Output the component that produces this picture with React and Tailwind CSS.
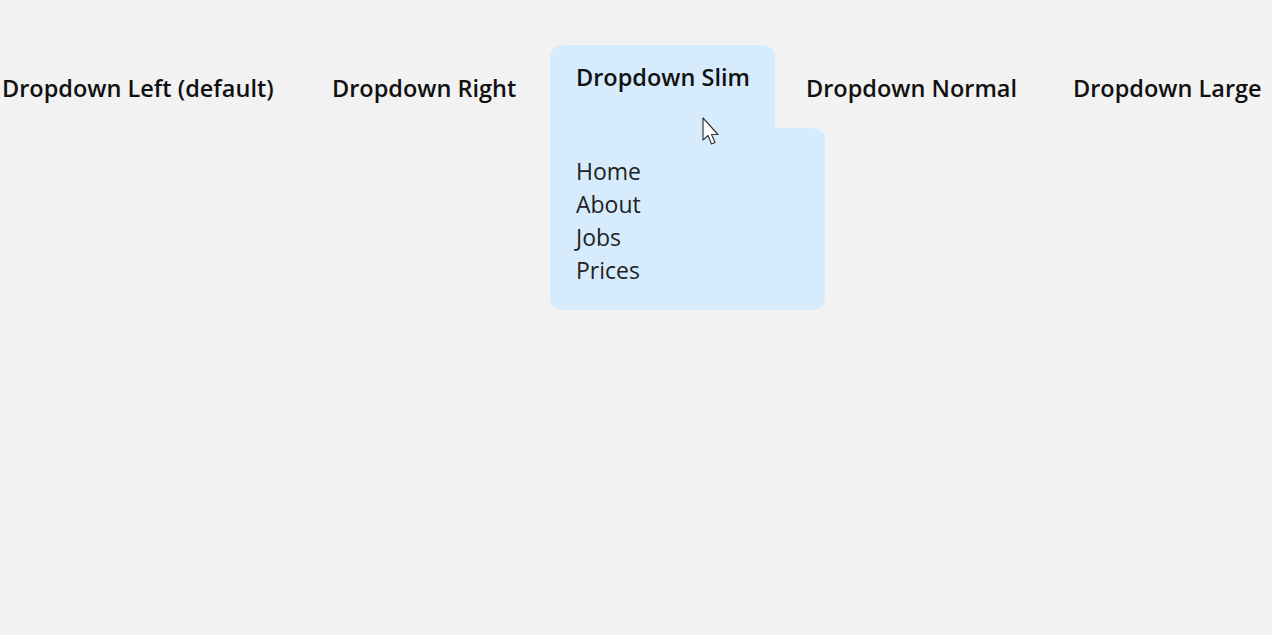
import React from "react";

const items = [
  { label: "Dropdown Left (default)", width: "w-[325px]" },
  { label: "Dropdown Right", width: "w-[239px]" },
  { label: "Dropdown Slim", width: "w-[225px]", open: true },
  { label: "Dropdown Normal", width: "w-[262px]" },
  { label: "Dropdown Large", width: "w-[240px]" },
];

const links = ["Home", "About", "Jobs", "Prices"];

const Cursor = () => (
  <svg width="20" height="30" viewBox="0 0 20 30" className="absolute left-[152px] top-[72px]">
    <path
      d="M1 1 L1 23 L6 18.5 L9.5 27 L13 25.5 L9.5 17.5 L16 17.5 Z"
      fill="#ffffff"
      stroke="#3a3a3a"
      strokeWidth="1.2"
      strokeLinejoin="round"
    />
  </svg>
);

const App = () => {
  return (
    <div className="min-h-screen overflow-hidden bg-[#f2f2f2] font-['Open_Sans',sans-serif] text-[#111]">
      <nav className="flex ml-[-24px] pt-[45px] gap-[5px]">
        {items.map((item) =>
          item.open ? (
            <div key={item.label} className={`relative shrink-0 ${item.width}`}>
              <div className="h-[83px] rounded-t-[12px] bg-[#d6ecfd] px-[26px] pt-[17px]">
                <span className="block text-[23.5px] font-semibold leading-[30px] whitespace-nowrap">
                  {item.label}
                </span>
              </div>
              <div className="absolute left-0 top-[83px] w-[275px] h-[182px] rounded-b-[12px] rounded-tr-[12px] bg-[#d6ecfd] px-[26px] pt-[27px]">
                {links.map((l) => (
                  <div key={l} className="text-[23px] leading-[33px] text-[#222]">
                    {l}
                  </div>
                ))}
              </div>
              <Cursor />
            </div>
          ) : (
            <div key={item.label} className={`shrink-0 ${item.width} px-[26px] pt-[28px]`}>
              <span className="block text-[23.5px] font-semibold leading-[30px] whitespace-nowrap">
                {item.label}
              </span>
            </div>
          )
        )}
      </nav>
    </div>
  );
};

export default App;
